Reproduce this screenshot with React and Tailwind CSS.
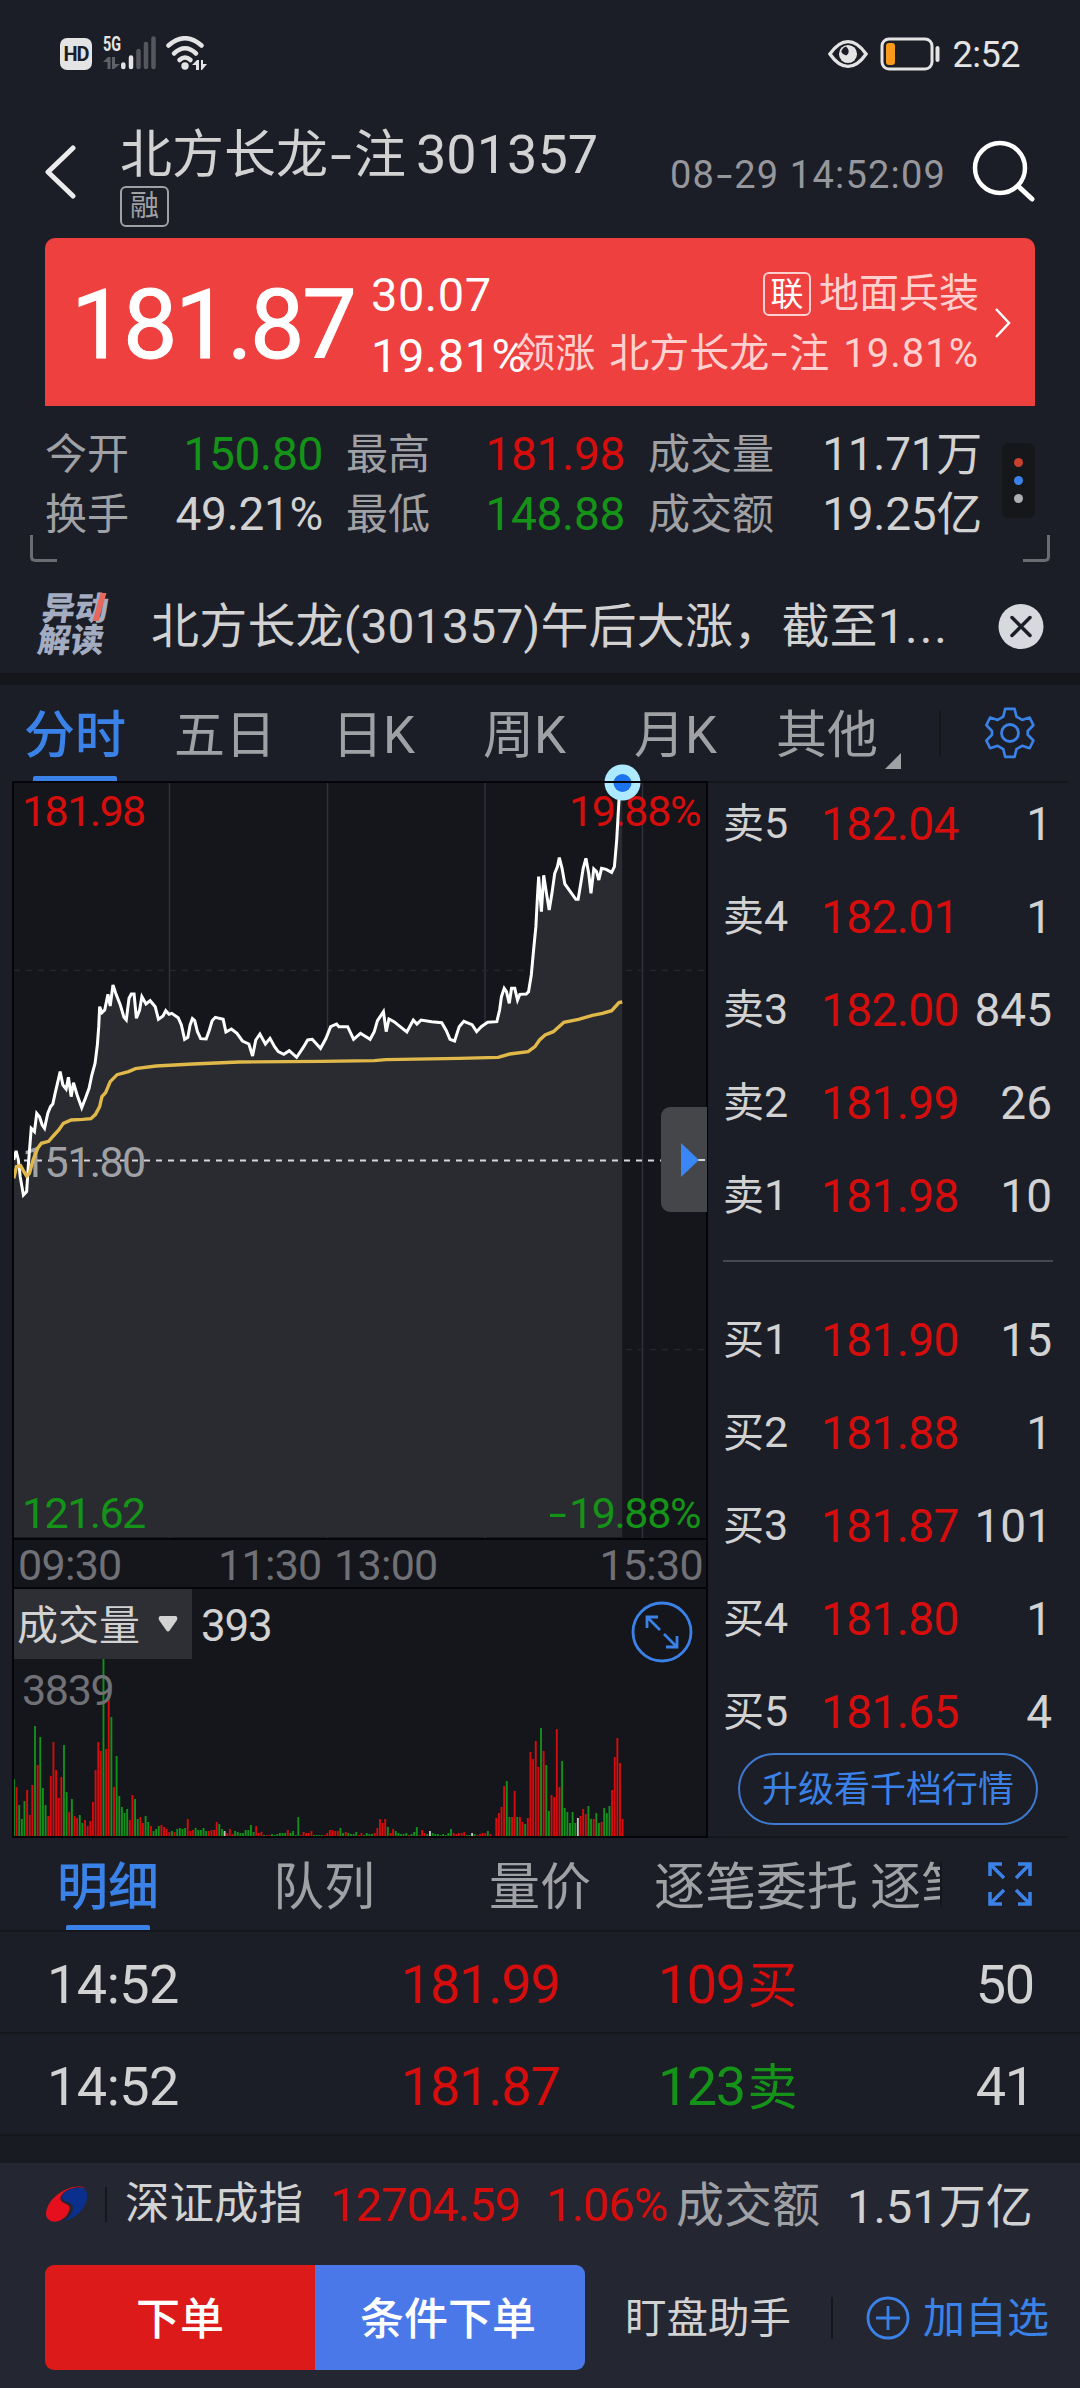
import React from 'react'

const sells = [
  ['卖5', '182.04', '1'],
  ['卖4', '182.01', '1'],
  ['卖3', '182.00', '845'],
  ['卖2', '181.99', '26'],
  ['卖1', '181.98', '10'],
]

const buys = [
  ['买1', '181.90', '15'],
  ['买2', '181.88', '1'],
  ['买3', '181.87', '101'],
  ['买4', '181.80', '1'],
  ['买5', '181.65', '4'],
]

const trades = [
  { time: '14:52', price: '181.99', deal: '109买', count: '50', color: 'text-[#d50d0d]' },
  { time: '14:52', price: '181.87', deal: '123卖', count: '41', color: 'text-[#149318]' },
]

const pricePoints =
  '30,1440 35,1413 40,1440 44,1490 51,1545 58,1535 62,1450 68,1345 75,1355 80,1300 86,1310 92,1335 97,1345 104,1300 110,1280 115,1272 120,1240 126,1205 131,1175 137,1215 144,1227 149,1192 155,1250 160,1208 168,1245 178,1283 186,1255 194,1225 200,1185 207,1150 212,1095 215,1040 217,980 222,998 228,990 235,943 240,978 246,915 252,940 262,975 270,1012 275,1020 281,955 286,942 292,942 297,1015 304,990 309,950 318,972 327,962 338,980 345,1018 355,1008 361,992 368,1003 374,1000 388,1013 395,1035 402,1078 409,1072 414,1035 419,1016 424,1022 430,1055 437,1076 449,1077 456,1050 462,1022 469,1012 486,1018 492,1056 504,1047 516,1060 528,1083 542,1092 550,1128 557,1080 566,1062 578,1092 588,1075 598,1100 606,1115 618,1123 630,1112 646,1132 660,1103 670,1080 680,1078 698,1105 710,1075 720,1040 733,1032 738,1040 757,1040 764,1060 770,1078 785,1060 806,1078 815,1055 822,1022 835,995 841,1055 847,1017 858,1025 868,1036 886,1056 900,1020 908,1032 917,1020 940,1025 962,1028 972,1052 980,1078 990,1083 1000,1040 1010,1024 1028,1034 1038,1055 1048,1040 1062,1027 1082,1025 1088,990 1092,950 1098,925 1103,935 1109,970 1114,925 1121,925 1127,960 1132,943 1146,942 1151,935 1157,885 1162,810 1167,740 1170,660 1173,590 1179,695 1184,586 1190,640 1196,690 1202,640 1208,580 1214,560 1218,533 1224,565 1230,612 1242,635 1254,658 1259,658 1266,600 1270,565 1276,535 1282,580 1287,640 1293,567 1299,575 1304,600 1310,565 1320,568 1332,577 1338,560 1343,480 1348,360 1355,305'

const averagePoints =
  '30,1495 36,1460 45,1457 52,1475 58,1488 64,1480 72,1440 82,1405 90,1390 106,1384 116,1368 128,1350 138,1330 155,1320 180,1318 198,1316 208,1303 217,1280 222,1250 230,1238 240,1205 255,1184 280,1175 295,1166 340,1158 420,1152 520,1146 700,1144 815,1142 840,1139 1000,1135 1085,1132 1110,1122 1150,1115 1165,1100 1175,1080 1187,1065 1205,1055 1228,1027 1260,1018 1290,1006 1312,1000 1332,992 1348,968 1355,966'

// [start x, bars], one bar per minute: r = up, g = down, w = flat
const volumeRuns = [
  [2, 'g57 r49 g31 g17 g35 r46 r21 r51 g110 r71 g99 g48 g31 r20 r60 r94 r66 r38 r59 g91 g44 r24 g37 r20 r18 g21 g13 r16 r10 r15 r34 r66 r94 r85 g188 r87 r147 g119 r49 g80 g40 g29 g23 g27 r16 r41 g37 g17 r19 r13 g20 g14 r10 g5 g7 g10 r11 r9 r7 r4 g5 r4 g7 g8 g7 g8 r17 r5 r6 g8 g6 g6 g8 g5 r5 r6 r6 r14 g12 g7 w5 r3 r7 r2 g5 g4 g3 g3 g6 g6 g11 g4 r10 r3 r4 g1 r1 r1 g2 g1 g2 g3 g3 g3 r6 g3 g5 g1 g19 r1 r4 r3 r3 r5 g1 g1 g1 g1 r1 r3 r6 r6 r5 r5 g8 g3 r4 g3 g2 g2 g4 r1 r3 g1 g3 g2 g2 r3 r8 r17 r13 r17 g9 r3 r7 g5 g3 g2 g2 g3 r1 g2 g4 g9 r1 r6 r3 g2 w5 g3 g2 g2 g1 g2 g1 g3 g7 r3 r2 r3 r3 r4 g1 g1 w3 g2 r1 r2 r3 r3 g5 r2'],
  [484.3, 'r18 r23 r29 r50 g55 g19 r19 r45 g19 r19 r14 g12 r18 r84 r77 r95 r69 g108 r85 g71 g25 r41 r39 r107 r49 g75 g28 g24 g13 g24 g13 w18 r20 r27 r22 g30 g17 r17 g23 g13 r14 g28 g23 g30 r46 r79 r98 r73 r17'],
]

const barColors = { r: '#d60b0b', g: '#12901a', w: '#c4c4c4' }

const Dash = () => <span className="inline-block w-[0.500em] scale-x-[1.500] text-center tracking-normal">-</span>

const StatusBar = () => (
  <div className="flex h-[108px] items-center pr-[60px] pl-[60px] text-[#e4e4e4]">
    <div className="flex h-[32px] w-[32px] items-center justify-center rounded-[7px] bg-[#e4e4e4] text-[20px] leading-none font-bold tracking-[-1px] text-[#1c1e27]">HD</div>
    <svg className="ml-[11px] overflow-visible" width="54" height="36" viewBox="0 0 54 36">
      <text x="0" y="14.500" fontSize="20" fontWeight="700" fill="#e4e4e4" textLength="18" lengthAdjust="spacingAndGlyphs">5G</text>
      <path d="M0 26L5 21H7.500V33H4.500V26ZM9 21H12V28H17L11 33H9Z" fill="#5f6168" />
      <g strokeWidth="4.500" strokeLinecap="round">
        <path d="M20.300 28.500v2.500M28 21.500v9.500" stroke="#e4e4e4" />
        <path d="M35.500 15v16M43 8v23M50.500 2.500v28.500" stroke="#55575f" />
      </g>
    </svg>
    <svg className="ml-[8px]" width="44" height="36" viewBox="0 0 44 36" fill="none" stroke="#e4e4e4" strokeLinecap="round">
      <path d="M3.500 9.500Q20 -5 36.500 9.500" strokeWidth="4.500" />
      <path d="M9 17.500Q20 7 31 17.500" strokeWidth="4.500" />
      <path d="M14.500 24Q20 19 25.500 24" strokeWidth="4.500" />
      <circle cx="20" cy="30" r="3.700" fill="#e4e4e4" stroke="none" />
      <path d="M27 29L32 24H34V34H31V29ZM36 24H38V28H42L37 34H36Z" fill="#e4e4e4" stroke="none" />
    </svg>
    <svg className="ml-auto" width="40" height="30" viewBox="0 0 42 30">
      <path d="M2 15Q11 2 21 2T40 15Q31 28 21 28T2 15Z" fill="none" stroke="#e4e4e4" strokeWidth="3.500" />
      <circle cx="21" cy="15" r="9.500" fill="#e4e4e4" />
      <path d="M19 7q5 5 1 9q-4 1-6-3q0-4 5-6z" fill="#1c1e27" />
    </svg>
    <svg className="ml-[12px]" width="62" height="34" viewBox="0 0 62 34" fill="none">
      <rect x="2" y="2" width="50" height="30" rx="7" stroke="#e4e4e4" strokeWidth="3" />
      <rect x="6" y="6" width="9" height="22" rx="3" fill="#f99a1c" />
      <path d="M57.500 11v12" stroke="#e4e4e4" strokeWidth="4" strokeLinecap="round" />
    </svg>
    <span className="ml-[11px] pt-[2px] text-[36px] leading-none tracking-[-0.500px]">2:52</span>
  </div>
)

const Header = () => (
  <div className="flex h-[130px] items-start">
    <svg className="mt-[37px] ml-[42px]" width="36" height="54" viewBox="0 0 36 54" fill="none">
      <path d="M31 3L6 27L31 51" stroke="#ececec" strokeWidth="5" strokeLinecap="round" strokeLinejoin="round" />
    </svg>
    <div className="ml-[42px] w-[540px] pt-[20px] text-[#d2d2d2]">
      <div className="flex text-[54px] leading-none whitespace-nowrap">
        <span className="w-[296px] text-[52px] leading-[56px]">北方长龙<Dash />注</span>
        <span>301357</span>
      </div>
      <div className="mt-[2px] flex h-[41px] w-[49px] items-center justify-center rounded-[6px] border-2 border-[#a0a1a5] text-[29px] leading-none text-[#a0a1a5]">融</div>
    </div>
    <div className="mt-[48px] ml-[10px] text-[38px] leading-none tracking-[1.200px] whitespace-nowrap text-[#96979c]">08<Dash />29 14:52:09</div>
    <svg className="mt-[32px] ml-auto mr-[44px]" width="64" height="64" viewBox="0 0 64 64" fill="none">
      <circle cx="28" cy="28" r="25" stroke="white" strokeWidth="4.500" />
      <path d="M46 46L60 59" stroke="white" strokeWidth="5" strokeLinecap="round" />
    </svg>
  </div>
)

const QuoteCard = () => (
  <div className="relative mx-[45px] flex h-[168px] rounded-t-[10px] bg-[#ee403e] text-white">
    <div className="ml-[26px] w-[300px] pt-[39px] text-[97px] leading-none tracking-[-2.500px] [-webkit-text-stroke:1px_white]">181.87</div>
    <div className="w-[170px] pt-[26px] text-[47px] leading-[61px] tracking-[0.500px]">
      <div>30.07</div>
      <div>19.81%</div>
    </div>
    <div className="absolute top-[26px] right-[56px] flex flex-col items-end text-[40px] leading-[60px] text-[#ffd0cf]">
      <div className="flex h-[60px] items-center">
        <span className="mr-[8px] flex h-[44px] w-[48px] items-center justify-center rounded-[6px] border-2 border-[#ffd0cf] text-[33px] leading-none text-white">联</span>
        <span>地面兵装</span>
      </div>
      <div className="flex gap-[14px] whitespace-nowrap">
        <span>领涨</span>
        <span>北方长龙<Dash />注</span>
        <span className="tracking-[1px]">19.81%</span>
      </div>
    </div>
    <svg className="absolute top-[68px] right-[23px]" width="18" height="34" viewBox="0 0 18 34" fill="none">
      <path d="M2 3L15 17L2 31" stroke="white" strokeWidth="2.500" />
    </svg>
  </div>
)

const Stats = () => (
  <div className="relative h-[162px] px-[45px] pt-[18px]">
    {[
      ['今开', '150.80', 'text-[#149318]', '最高', '181.98', 'text-[#d50d0d]', '成交量', '11.71万'],
      ['换手', '49.21%', 'text-[#d2d2d2]', '最低', '148.88', 'text-[#149318]', '成交额', '19.25亿'],
    ].map((row) => (
      <div key={row[0]} className="flex h-[60px] items-center text-[46px] leading-none tracking-[-0.300px] whitespace-nowrap">
        <span className="w-[97px] pt-[2px] text-[42px] tracking-normal text-[#a0a1a5]">{row[0]}</span>
        <span className={`w-[181px] text-right ${row[2]}`}>{row[1]}</span>
        <span className="ml-[23px] w-[98px] pt-[2px] text-[42px] tracking-normal text-[#a0a1a5]">{row[3]}</span>
        <span className={`w-[181px] text-right ${row[5]}`}>{row[4]}</span>
        <span className="ml-[23px] w-[140px] pt-[2px] text-[42px] tracking-normal text-[#a0a1a5]">{row[6]}</span>
        <span className="w-[194px] text-right">{row[7]}</span>
      </div>
    ))}
    <div className="absolute top-[37px] right-[45px] flex h-[75px] w-[33px] flex-col items-center justify-center gap-[9px] rounded-[7px] bg-[#16171b]">
      <i className="h-[9px] w-[9px] rounded-full bg-[#c8402f]" />
      <i className="h-[9px] w-[9px] rounded-full bg-[#3b82e8]" />
      <i className="h-[9px] w-[9px] rounded-full bg-[#b0b0b4]" />
    </div>
    <i className="absolute top-[129px] left-[30px] h-[27px] w-[27px] rounded-bl-[5px] border-b-3 border-l-3 border-[#6b6c71]" />
    <i className="absolute top-[129px] right-[30px] h-[27px] w-[27px] rounded-br-[5px] border-r-3 border-b-3 border-[#6b6c71]" />
  </div>
)

const News = () => (
  <div className="flex h-[105px] items-center pt-[9px] pl-[40px] text-[#d2d2d2]">
    <div className="relative w-[111px] skew-x-[-8deg] text-[33px] leading-[32px] font-black text-[#a3acc0]">
      <div>异动</div>
      <div>解读</div>
      <i className="absolute top-0 left-[54px] h-[28px] w-[6px] skew-x-[-8deg] bg-[#e8695c]" />
    </div>
    <div className="w-[830px] pt-[4px] text-[48px] leading-none tracking-[0.200px] whitespace-nowrap">
      北方长龙(301357)午后大涨，截至1<span className="tracking-[2px]">...</span>
    </div>
    <svg className="ml-[17px] mt-[3px]" width="46" height="46" viewBox="0 0 46 46">
      <circle cx="23" cy="22.500" r="22.500" fill="#d8d9de" />
      <path d="M14 13.500L32 31.500M32 13.500L14 31.500" stroke="#1c1e27" strokeWidth="3.500" strokeLinecap="round" />
    </svg>
  </div>
)

const ChartTabs = () => (
  <div className="relative flex h-[96px] items-center text-[51px] leading-[60px] whitespace-nowrap text-[#a0a1a5]">
    <span className="ml-[24px] w-[150px] pt-[5px] font-medium text-[#3b82e8]">分时</span>
    <span className="w-[158px] pt-[5px]">五日</span>
    <span className="w-[151px] pt-[5px]">日K</span>
    <span className="w-[151px] pt-[5px]">周K</span>
    <span className="w-[142px] pt-[5px]">月K</span>
    <span className="w-[109px] pt-[5px]">其他</span>
    <svg className="mt-[56px]" width="16" height="16"><path d="M16 0V16H0Z" fill="#a0a1a5" /></svg>
    <i className="ml-[38px] h-[45px] w-[2px] bg-[#15161a]" />
    <svg className="ml-[42px]" width="54" height="54" viewBox="0 0 54 54" fill="none" stroke="#3b82e8" strokeWidth="2.800" strokeLinejoin="round">
      <path d="M22 3h10l2 8 6 3.500 8-2.500 4 8-6 6v4l6 6-4 8-8-2.500-6 3.500-2 8h-10l-2-8-6-3.500-8 2.500-4-8 6-6v-4l-6-6 4-8 8 2.500 6-3.500z" transform="translate(1.500 0) scale(0.940 0.960)" />
      <circle cx="27" cy="27" r="8.500" />
    </svg>
    <i className="absolute bottom-0 left-[33px] h-[5px] w-[84px] rounded-t-[2px] bg-[#3b82e8]" />
  </div>
)

const PriceChart = () => (
  <div className="relative h-[759px]">
    <svg className="absolute top-0 left-0 overflow-visible" width="696" height="759" viewBox="0 0 696 759" fill="none">
      <g stroke="#2f303a" strokeWidth="1.500">
        <path d="M157.500 2V757M315.500 2V757M473 2V757M630.500 2V757" />
      </g>
      <path d="M2 189.500H694M2 568.500H694" stroke="#24262b" strokeWidth="1.500" strokeDasharray="6 6" />
      <g transform="translate(-12 -101) scale(0.4592 0.33333)">
        <polygon points={`${pricePoints} 1355,2572 30,2572`} fill="#2a2b30" />
      </g>
      <path d="M12 379.500H694" stroke="#d6d6d8" strokeWidth="2" strokeDasharray="6 6" />
    </svg>
    <span className="absolute top-[9px] left-[10px] text-[43px] leading-none tracking-[-1.600px] text-[#d50d0d]">181.98</span>
    <span className="absolute top-[9px] right-[8px] text-[43px] leading-none tracking-[-1.400px] text-[#d50d0d]">19.88%</span>
    <span className="absolute top-[360px] left-[10px] text-[43px] leading-none tracking-[-1.600px] text-[#a0a1a5]">151.80</span>
    <span className="absolute top-[711px] left-[10px] text-[43px] leading-none tracking-[-1.600px] text-[#149318]">121.62</span>
    <span className="absolute top-[711px] right-[8px] text-[43px] leading-none tracking-[-1.400px] whitespace-nowrap text-[#149318]"><Dash />19.88%</span>
    <svg className="absolute top-0 left-0 overflow-visible" width="696" height="759" viewBox="0 0 696 759" fill="none">
      <g transform="translate(-12 -101) scale(0.4592 0.33333)">
        <polyline points={pricePoints} stroke="white" strokeWidth="3" vectorEffect="non-scaling-stroke" />
        <polyline points={averagePoints} stroke="#e0b94a" strokeWidth="3.400" vectorEffect="non-scaling-stroke" />
      </g>
      <circle cx="610.500" cy="1.500" r="18" fill="#aeeaff" />
      <circle cx="610.500" cy="2" r="9" fill="#1d72ee" />
      <rect x="1" y="1" width="694" height="757" stroke="#050509" strokeWidth="2" />
    </svg>
    <div className="absolute top-[326px] right-[1px] flex h-[105px] w-[46px] items-center rounded-l-[9px] bg-[#45464a]">
      <svg className="ml-[20px]" width="26" height="34">
        <path d="M17 17H24" stroke="#d6d6d8" strokeWidth="2" />
        <path d="M0 0L18 17L0 34Z" fill="#3a86f4" />
      </svg>
    </div>
  </div>
)

const VolumeChart = () => (
  <div className="relative h-[251px] border-2 border-[#050509]">
    <svg className="absolute bottom-0 left-0" width="692" height="247" viewBox="0 0 692 247" fill="none">
      {volumeRuns.map(([start, run]) =>
        run.split(' ').map((bar, i) => {
          const height = Number(bar.slice(1))
          return <rect key={`${start}-${i}`} x={start - 3 + i * 2.633} y={247 - height} width="1.9" height={height} fill={barColors[bar[0]]} />
        })
      )}
    </svg>
    <div className="relative flex h-[70px] items-center">
      <div className="flex h-[70px] w-[178px] items-center bg-[#2e2f34] pl-[3px] text-[41px] leading-none text-[#d2d2d2]">
        <span className="pt-[4px]">成交量</span>
        <svg className="ml-[18px]" width="20" height="16"><path d="M2 0H18Q20 1 19 4L12 14Q10 17 8 14L1 4Q0 1 2 0Z" fill="#d2d2d2" /></svg>
      </div>
      <span className="ml-[9px] pt-[3px] text-[44px] leading-none tracking-[-1.200px] text-[#d2d2d2]">393</span>
      <svg className="mt-[16px] mr-[13px] ml-auto" width="62" height="62" viewBox="0 0 62 62" fill="none" stroke="#3b82e8" strokeWidth="2.800">
        <circle cx="31" cy="31" r="29" />
        <path d="M16 27V16H27M16 16L29 29M46 35V46H35M46 46L33 33" />
      </svg>
    </div>
    <div className="relative mt-[10px] ml-[8px] text-[43px] leading-none tracking-[-1.300px] text-[#707176]">3839</div>
  </div>
)

const BookRow = ({ row }) => (
  <div className="flex h-[93px] items-center pr-[16px] pl-[15px] text-[46px] leading-none">
    <span className="w-[98px] text-[41px] whitespace-nowrap text-[#d2d2d2]">
      {row[0][0]}
      <span className="text-[43px]">{row[0][1]}</span>
    </span>
    <span className="tracking-[-0.600px] text-[#d50d0d]">{row[1]}</span>
    <span className="ml-auto text-[#d2d2d2]">{row[2]}</span>
  </div>
)

const OrderBook = () => (
  <div className="mr-[12px] flex flex-1 flex-col border-y-2 border-[#15161c]">
    <div className="-mt-[6px]">
      {sells.map((row) => <BookRow key={row[0]} row={row} />)}
    </div>
    <div className="mt-[18px] mr-[15px] mb-[31px] ml-[15px] h-[2px] bg-[#444654]" />
    {buys.map((row) => <BookRow key={row[0]} row={row} />)}
    <div className="-mt-[5px] ml-[30px] flex h-[72px] w-[300px] shrink-0 items-center justify-center rounded-full border-2 border-[#3f79cf] pt-[2px] text-[36px] leading-none text-[#3b82e8]">升级看千档行情</div>
  </div>
)

const DetailTabs = () => (
  <div className="relative flex h-[94px] items-center border-b-2 border-[#15161c] text-[51px] leading-[70px] whitespace-nowrap text-[#a0a1a5]">
    <div className="flex w-[940px] overflow-hidden pt-[7px]">
      <span className="ml-[57px] w-[216px] shrink-0 font-medium text-[#3b82e8]">明细</span>
      <span className="w-[216px] shrink-0">队列</span>
      <span className="w-[165px] shrink-0">量价</span>
      <span className="w-[216px] shrink-0">逐笔委托</span>
      <span className="shrink-0">逐笔成交</span>
    </div>
    <i className="h-[45px] w-[2px] bg-[#15161c]" />
    <svg className="ml-[46px]" width="44" height="44" viewBox="0 0 44 44" fill="none" stroke="#3b82e8" strokeWidth="3.500">
      <path d="M2 14V2H14M2 2L16 16M30 2H42V14M42 2L28 16M2 30V42H14M2 42L16 28M30 42H42V30M42 42L28 28" />
    </svg>
    <i className="absolute bottom-0 left-[66px] h-[5px] w-[84px] rounded-t-[2px] bg-[#3b82e8]" />
  </div>
)

const Footer = () => (
  <div className="h-[225px] bg-[#242632]">
    <div className="flex h-[82px] items-center pl-[45px] leading-none whitespace-nowrap text-[#d2d2d2]">
      <svg width="43" height="40" viewBox="0 0 43 40">
        <path d="M40 4C28 -2 2 12 1 30C2 42 20 39 24 27C28 18 12 21 16 12C21 4 33 2 40 4Z" fill="#e60f1d" />
        <path d="M38 4C28 3 17 7 17 14C18 19 30 17 28 26C26 32 21 36 20 37C32 34 43 22 42 11C42 7 40 5 38 4Z" fill="#0b2f8c" />
      </svg>
      <i className="ml-[17px] h-[35px] w-[2px] bg-[#16171c]" />
      <span className="ml-[18px] w-[205px] text-[44.500px]">深证成指</span>
      <span className="w-[216px] text-[47px] tracking-[-0.900px] text-[#d50d0d]">12704.59</span>
      <span className="w-[130px] text-[47px] tracking-[-1px] text-[#d50d0d]">1.06%</span>
      <span className="w-[171px] pt-[3px] text-[48px] text-[#a0a1a5]">成交额</span>
      <span className="pt-[4px] text-[47px]">1.51万亿</span>
    </div>
    <div className="mt-[20px] flex h-[105px] items-center pl-[45px] text-[44px] leading-none whitespace-nowrap">
      <button className="h-full w-[270px] rounded-l-[9px] bg-[#dc1a1a] pt-[4px] font-medium text-white">下单</button>
      <button className="h-full w-[270px] rounded-r-[9px] bg-[#4b78e8] pt-[4px] pr-[4px] font-medium text-white">条件下单</button>
      <span className="ml-[40px] w-[206px] pt-[3px] text-[41.500px] text-[#d2d2d2]">盯盘助手</span>
      <i className="h-[42px] w-[2px] bg-[#16171c]" />
      <svg className="ml-[33px]" width="44" height="44" viewBox="0 0 44 44" fill="none" stroke="#3b82e8" strokeWidth="2.800">
        <circle cx="22" cy="22" r="20" />
        <path d="M22 10V34M10 22H34" />
      </svg>
      <span className="ml-[13px] pt-[3px] text-[42px] text-[#3b82e8]">加自选</span>
    </div>
  </div>
)

const App = () => (
  <div className="h-[2388px] w-[1080px] overflow-hidden bg-[#1c1e27] font-[Roboto,'Noto_Sans_CJK_SC',sans-serif]">
    <StatusBar />
    <Header />
    <QuoteCard />
    <div className="text-[#d2d2d2]">
      <Stats />
    </div>
    <News />
    <div className="h-[12px] bg-[#15161a]" />
    <ChartTabs />
    <div className="flex h-[1057px]">
      <div className="ml-[12px] w-[696px] bg-[#15161b]">
        <PriceChart />
        <div className="flex h-[47px] items-center border-x-2 border-[#050509] pt-[4px] pl-[4px] text-[43px] leading-none tracking-[-0.700px] text-[#707176]">
          <span className="w-[200px]">09:30</span>
          <span className="w-[116px]">11:30</span>
          <span>13:00</span>
          <span className="mr-[3px] ml-auto">15:30</span>
        </div>
        <VolumeChart />
      </div>
      <OrderBook />
    </div>
    <DetailTabs />
    {trades.map((trade) => (
      <div key={trade.price} className="flex h-[102px] items-center border-b-2 border-[#15161c] pt-[6px] pr-[46px] pl-[47px] text-[54px] leading-none text-[#d2d2d2]">
        <span className="w-[354px] tracking-[-0.500px]">{trade.time}</span>
        <span className="w-[257px] tracking-[-1.200px] text-[#d50d0d]">{trade.price}</span>
        <span className={`tracking-[-1.500px] ${trade.color}`}>
          {trade.deal.slice(0, 3)}
          <span className="ml-[3px] text-[50px]">{trade.deal.slice(3)}</span>
        </span>
        <span className="ml-auto tracking-[-1.200px]">{trade.count}</span>
      </div>
    ))}
    <div className="h-[27px] bg-[#191b23]" />
    <Footer />
  </div>
)

export default App
